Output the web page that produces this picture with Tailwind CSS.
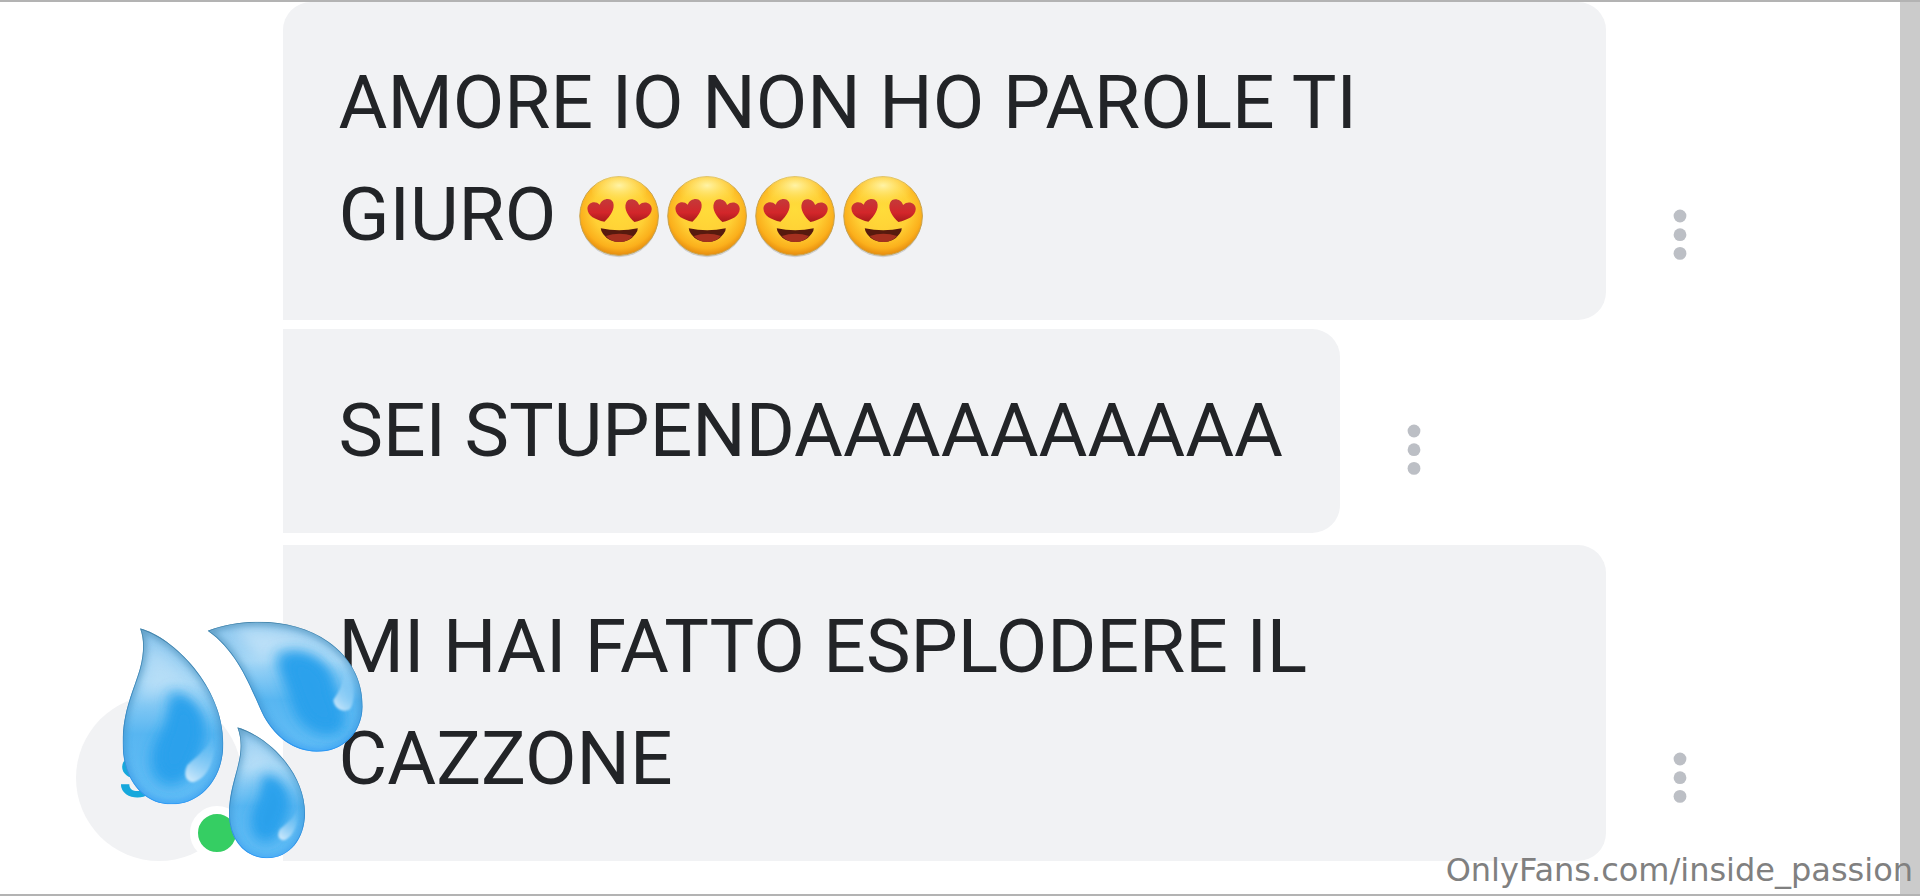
<!DOCTYPE html>
<html lang="it">

<head>
    <meta charset="UTF-8">
    <meta name="viewport" content="width=device-width, initial-scale=1.0">
    <title>Chat</title>
    <script src="https://cdn.jsdelivr.net/npm/@tailwindcss/browser@4"></script>
</head>

<body class="bg-white overflow-hidden">
    <!-- Simboli riutilizzati -->
    <svg class="absolute w-0 h-0">
        <defs>
            <radialGradient id="face" cx="0.5" cy="0.42" r="0.6">
                <stop offset="0" stop-color="#ffdc3a" />
                <stop offset="0.55" stop-color="#ffd035" />
                <stop offset="0.82" stop-color="#fbb01c" />
                <stop offset="1" stop-color="#e0820c" />
            </radialGradient>
            <radialGradient id="shine" cx="0.5" cy="0.3" r="0.6">
                <stop offset="0" stop-color="#fff3a6" />
                <stop offset="1" stop-color="#ffe25a" stop-opacity="0" />
            </radialGradient>
            <linearGradient id="heart" x1="0" y1="0" x2="0" y2="1">
                <stop offset="0" stop-color="#c43a3a" />
                <stop offset="0.6" stop-color="#d3262a" />
                <stop offset="1" stop-color="#a81a1c" />
            </linearGradient>
            <symbol id="love" viewBox="0 0 264 270">
                <ellipse cx="132" cy="141" rx="117" ry="118" fill="#cfcfd0" />
                <circle cx="132" cy="135" r="118" fill="url(#face)" stroke="#c9a24a" stroke-width="3" />
                <ellipse cx="132" cy="62" rx="82" ry="46" fill="url(#shine)" />
                <path d="M88 152C60 146 38 134 37 113C37 95 60 86 74 101C80 82 107 77 114 94C121 113 106 136 88 152Z"
                    fill="url(#heart)" />
                <path d="M178 153C206 147 229 135 230 114C230 96 207 87 192 102C186 83 160 78 153 95C145 114 160 137 178 153Z"
                    fill="url(#heart)" />
                <path d="M77 172Q132 184 188 172Q189 179 181 189Q164 213 133 213Q101 213 84 189Q77 179 77 172Z"
                    fill="#571a0e" />
                <path d="M92 195Q133 182 174 195Q158 213 133 213Q108 213 92 195Z" fill="#a5301f" />
            </symbol>
            <symbol id="dots" viewBox="0 0 14 52">
                <circle cx="7" cy="7" r="6.4" />
                <circle cx="7" cy="25.7" r="6.4" />
                <circle cx="7" cy="44.4" r="6.4" />
            </symbol>
        </defs>
    </svg>

    <div class="relative flex w-[1920px] h-[896px] overflow-hidden border-y-2 border-[#b3b3b3]">
        <!-- Messaggi -->
        <main
            class="flex-1 flex flex-col items-start pl-[282.5px] font-[Roboto,sans-serif] text-[74.95px] leading-[112px] text-[#222427] whitespace-nowrap">
            <div class="flex items-end gap-[67px] mb-[9px]">
                <div class="w-[1323.5px] h-[318px] pt-[44px] pl-[56px] bg-[#f1f2f4] rounded-[28px] rounded-bl-none">
                    <p>AMORE IO NON HO PAROLE TI</p>
                    <p class="flex items-center">GIURO
                        <span class="flex ml-[18.5px] mt-[4px]">
                            <svg class="w-[88.2px] h-[90px]"><use href="#love" /></svg>
                            <svg class="w-[88.2px] h-[90px]"><use href="#love" /></svg>
                            <svg class="w-[88.2px] h-[90px]"><use href="#love" /></svg>
                            <svg class="w-[88.2px] h-[90px]"><use href="#love" /></svg>
                        </span>
                    </p>
                </div>
                <svg class="w-[14px] h-[52px] mb-[59.5px] fill-[#bcbfc5]"><use href="#dots" /></svg>
            </div>

            <div class="flex items-end gap-[67px] mb-[12px]">
                <div class="w-[1057.5px] h-[204px] pt-[45px] pl-[56px] bg-[#f1f2f4] rounded-r-[28px]">
                    <p>SEI STUPENDAAAAAAAAAA</p>
                </div>
                <svg class="w-[14px] h-[52px] mb-[57px] fill-[#bcbfc5]"><use href="#dots" /></svg>
            </div>

            <div class="flex items-end gap-[67px]">
                <div class="w-[1323.5px] h-[315.5px] pt-[45px] pl-[56px] bg-[#f1f2f4] rounded-r-[28px]">
                    <p>MI HAI FATTO ESPLODERE IL</p>
                    <p>CAZZONE</p>
                </div>
                <svg class="w-[14px] h-[52px] mb-[57px] fill-[#bcbfc5]"><use href="#dots" /></svg>
            </div>
        </main>

        <!-- Barra laterale destra -->
        <div class="w-[20.5px] bg-[#cbcbcb]"></div>

        <!-- Avatar -->
        <div class="absolute left-[76px] top-[693px] w-[166px] h-[166px] rounded-full bg-[#f1f2f4]">
            <span
                class="absolute left-[43px] top-[53px] font-[Roboto,sans-serif] font-bold text-[57px] leading-[60px] text-[#16a8dc]">S</span>
            <span class="absolute left-[114px] top-[111px] w-[54px] h-[54px] rounded-full bg-[#35ce63] border-8 border-white"></span>
        </div>

        <!-- Gocce -->
        <svg class="absolute left-[60px] top-[598px] w-[320px] h-[290px]" viewBox="0 0 960 870">
            <defs>
                <filter id="b8" x="-50%" y="-50%" width="200%" height="200%"><feGaussianBlur stdDeviation="9" /></filter>
                <filter id="b18" x="-50%" y="-50%" width="200%" height="200%"><feGaussianBlur stdDeviation="20" /></filter>
                <filter id="b3" x="-50%" y="-50%" width="200%" height="200%"><feGaussianBlur stdDeviation="3" /></filter>
                <linearGradient id="water" x1="0" y1="0" x2="0" y2="1">
                    <stop offset="0" stop-color="#8cc6ee" />
                    <stop offset="0.3" stop-color="#a3d6f6" />
                    <stop offset="0.6" stop-color="#58b6f1" />
                    <stop offset="1" stop-color="#62bdf6" />
                </linearGradient>
                <linearGradient id="edge" x1="0" y1="0" x2="0" y2="1">
                    <stop offset="0" stop-color="#4585ab" />
                    <stop offset="0.6" stop-color="#3a8cc6" />
                    <stop offset="1" stop-color="#2b97f5" />
                </linearGradient>
                <linearGradient id="glint" x1="0.8" y1="0" x2="0.3" y2="1">
                    <stop offset="0" stop-color="#8accf6" stop-opacity="0" />
                    <stop offset="1" stop-color="#c6e6fb" />
                </linearGradient>
                <path id="d1"
                    d="M240 85C340 112 490 260 490 430C490 540 420 613 335 613C250 613 188 540 188 430C188 330 222 270 240 205C253 155 252 115 240 85Z" />
                <path id="d2"
                    d="M443 92C560 48 712 58 805 125C872 172 908 240 908 320C905 400 850 455 770 455C700 452 650 415 612 350C575 275 540 160 443 92Z" />
                <path id="d3"
                    d="M532 382C630 412 735 520 735 640C735 715 690 775 620 775C550 772 507 715 507 640C507 570 532 520 540 465C544 430 542 410 532 382Z" />
                <clipPath id="c1"><use href="#d1" /></clipPath>
                <clipPath id="c2"><use href="#d2" /></clipPath>
                <clipPath id="c3"><use href="#d3" /></clipPath>
            </defs>
            <g clip-path="url(#c1)">
                <use href="#d1" fill="url(#water)" />
                <path d="M270 140C350 190 415 270 445 360L350 260L245 300Z" fill="#c3e3f8" opacity="0.6" filter="url(#b18)" />
                <use href="#d1" fill="none" stroke="url(#edge)" stroke-width="20" opacity="0.6" filter="url(#b8)" />
                <path d="M335 275C400 285 445 350 430 430C400 490 390 550 330 555C260 550 260 450 305 400C340 360 325 310 335 275Z"
                    fill="#29a1ec" filter="url(#b18)" />
                <path d="M345 300C395 300 430 350 415 420C395 470 385 525 340 530C290 520 290 450 320 400Z" fill="#29a1ec"
                    filter="url(#b18)" />
                <path d="M463 400C472 470 445 535 400 547C375 545 370 520 382 495C410 470 440 450 463 400Z" fill="url(#glint)"
                    filter="url(#b3)" />
                <use href="#d1" fill="none" stroke="url(#edge)" stroke-width="5" />
            </g>
            <g clip-path="url(#c2)">
                <use href="#d2" fill="url(#water)" />
                <path d="M520 85C650 75 770 110 840 200L700 145L600 180Z" fill="#c9e6f9" opacity="0.7" filter="url(#b18)" />
                <use href="#d2" fill="none" stroke="url(#edge)" stroke-width="20" opacity="0.6" filter="url(#b8)" />
                <path d="M650 165C730 140 805 180 820 240C820 290 860 340 850 385C810 425 730 395 705 335C690 270 655 225 650 165Z"
                    fill="#29a1ec" filter="url(#b18)" />
                <path d="M670 175C740 155 790 195 808 250C810 305 845 340 835 375C790 400 740 370 720 315Z" fill="#29a1ec"
                    filter="url(#b18)" />
                <path d="M848 205C885 235 890 300 870 328C850 340 822 325 820 300C840 270 855 245 848 205Z" fill="url(#glint)"
                    filter="url(#b3)" />
                <use href="#d2" fill="none" stroke="url(#edge)" stroke-width="5" />
            </g>
            <g clip-path="url(#c3)">
                <use href="#d3" fill="url(#water)" />
                <path d="M560 420C630 460 670 510 690 570L630 505L555 535Z" fill="#c3e3f8" opacity="0.6" filter="url(#b18)" />
                <use href="#d3" fill="none" stroke="url(#edge)" stroke-width="16" opacity="0.6" filter="url(#b8)" />
                <path d="M612 520C670 530 700 590 685 640C665 680 655 730 612 728C560 715 570 645 592 610C612 580 602 545 612 520Z"
                    fill="#29a1ec" filter="url(#b18)" />
                <path d="M620 540C665 545 685 590 670 635C650 675 645 705 615 702C580 690 582 640 600 610Z" fill="#29a1ec"
                    filter="url(#b8)" opacity="0.6" />
                <path d="M714 620C718 670 700 712 672 721C655 720 650 705 660 687C680 670 702 655 714 620Z" fill="url(#glint)"
                    filter="url(#b3)" />
                <use href="#d3" fill="none" stroke="url(#edge)" stroke-width="5" />
            </g>
        </svg>

        <!-- Filigrana -->
        <p
            class="absolute right-[7px] bottom-[5px] font-['DejaVu_Sans',sans-serif] text-[32px] leading-[38px] text-[#808080] whitespace-nowrap">
            OnlyFans.com/inside_passion</p>
    </div>
</body>

</html>
